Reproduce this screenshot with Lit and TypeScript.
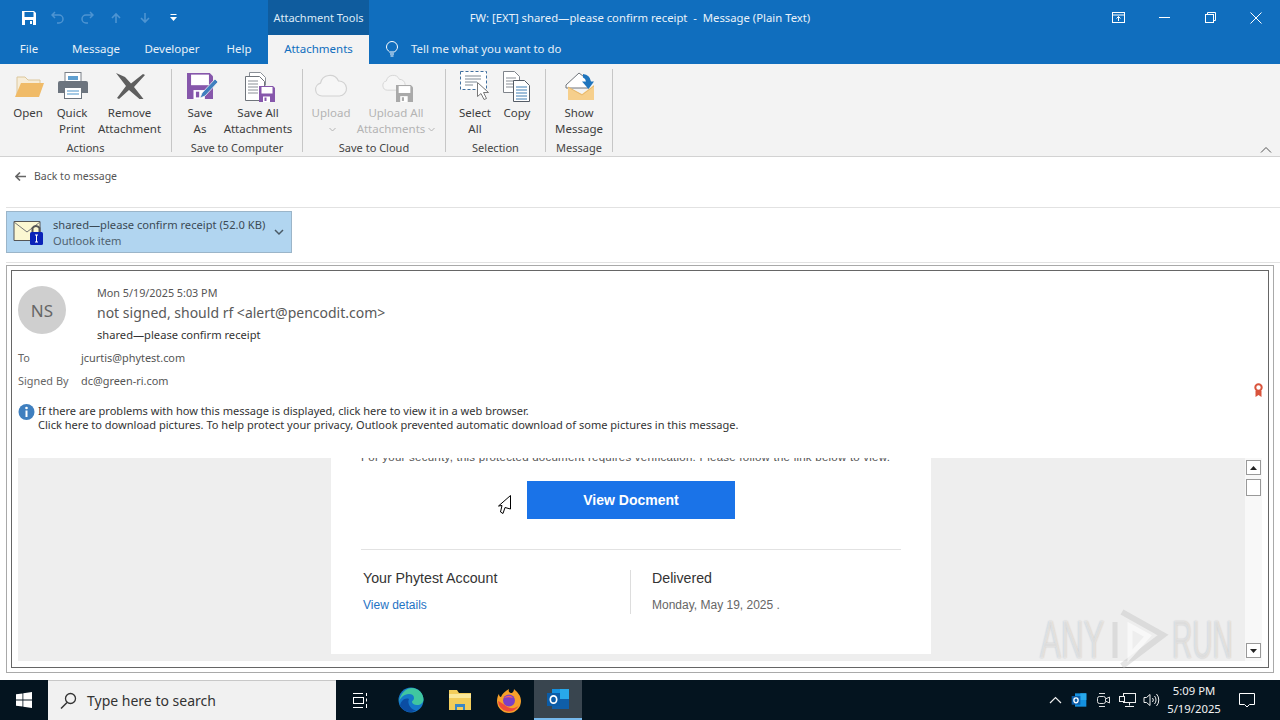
import { LitElement, html, css, svg } from 'lit';
import { customElement } from 'lit/decorators.js';

const floppy = (x: number, y: number, s: number, c: string) => svg`
  <g transform="translate(${x} ${y}) scale(${s / 16})">
    <path d="M0 0h14l2 2v14H0z" fill="${c}"/>
    <rect x="2.5" y="1" width="11" height="6.5" fill="#fff"/>
    <rect x="4" y="10.5" width="7" height="5.5" fill="#fff"/>
    <rect x="5.5" y="11.5" width="2" height="3.5" fill="${c}"/>
  </g>`;

const docLines = (x: number, y: number, w: number, n: number, c = '#8a8f96') =>
  Array.from({ length: n }, (_, i) => svg`<line x1="${x}" x2="${x + w}" y1="${y + i * 3}" y2="${y + i * 3}" stroke="${c}"/>`);

const cloud = (c: string) => svg`<path d="M9 28a6.500 6.500 0 0 1-1.500-12.800a9.500 9.500 0 0 1 18-2.200a7.500 7.500 0 0 1 1 15z" fill="#f6f6f6" stroke="${c}" stroke-width="1.200"/>`;

const ICONS: Record<string, unknown> = {
  open: svg`
    <path d="M7 27V9h8l3 3h12v5" fill="#f7edd8" stroke="#dcc79c"/>
    <path d="M5 29l6-14h23l-5 14z" fill="#f0bb68"/>`,
  print: svg`
    <rect x="11" y="4.500" width="16" height="9" fill="#fff" stroke="#7a8088"/>
    <rect x="14" y="8" width="10" height="4" fill="#5f9fd0"/>
    <path d="M4 15a2 2 0 0 1 2-2h26a2 2 0 0 1 2 2v10H4z" fill="#6c747e"/>
    <rect x="10.500" y="19.500" width="17" height="11" fill="#fff" stroke="#6c747e"/>
    <path d="M13 23h12M13 26h12" stroke="#4b93c9"/>`,
  remove: svg`
    <path d="M4 5l9 4 6 6.500L31 6l2 1-11 12 9.500 12h-4L17 22 7 31l-2-1 9-12z" fill="#5f5f5f"/>`,
  saveAs: svg`
    ${floppy(5, 5, 26, '#8657ab')}
    <path d="M33 11l3 3-13 14-5 2 2-5z" fill="#3f7fbf" stroke="#f3f3f3" stroke-width=".8"/>`,
  saveAll: svg`
    <path d="M9.500 8.500V4.500h11l5 5v8" fill="#fff" stroke="#8a8f96"/>
    <path d="M5.500 8.500h14l5 5v19h-19z" fill="#fff" stroke="#6f747b"/>
    ${docLines(8, 13, 10, 5)}
    ${floppy(19, 18, 16, '#8657ab')}`,
  upload: cloud('#d2d2d2'),
  uploadAll: svg`
    <g transform="translate(3 2) scale(.72)">${cloud('#d2d2d2')}</g>
    ${floppy(18, 17, 17, '#a9a9a9')}`,
  select: svg`
    <rect x="3.500" y="3.500" width="26" height="18" fill="#fff" stroke="#3f6f9f" stroke-dasharray="3 2"/>
    <path d="M8 8h16M8 11h16M8 14h12M8 17h8" stroke="#7f8a95"/>
    <path d="M20.500 14.500v14l3.500-3 3 6 2.500-1-3-6h5z" fill="#fff" stroke="#777"/>`,
  copy: svg`
    <path d="M4.500 3.500h11l5 5v16h-16z" fill="#fff" stroke="#7f848b"/>
    ${docLines(7, 10, 10, 4)}
    <path d="M14.500 12.500h11l5 5v16h-16z" fill="#fff" stroke="#555c66"/>
    ${docLines(17, 19, 11, 5, '#3f7fb5')}`,
  show: svg`
    <path d="M5 17L18 5l9 7v8H5z" fill="#fff" stroke="#70757b"/>
    <path d="M7 19v13h26V17L21 26z" fill="#f6cf8c"/>
    <path d="M7 19l14 8 12-9" fill="none" stroke="#e7b86c"/>
    <path d="M22 6a9 9 0 0 1 8 7.500h3L27.500 21 21 13.500h4a5 5 0 0 0-3-4z" fill="#1f75bd"/>`,
};

type Btn = { icon: string; lines: string[]; w: number; caret?: boolean };
type Group = { label: string; pad: string; off?: boolean; items: Btn[] };

const GROUPS: Group[] = [
  { label: 'Actions', pad: 'g-a', items: [
    { icon: 'open', lines: ['Open'], w: 44 },
    { icon: 'print', lines: ['Quick', 'Print'], w: 44 },
    { icon: 'remove', lines: ['Remove', 'Attachment'], w: 71 },
  ] },
  { label: 'Save to Computer', pad: 'g-b', items: [
    { icon: 'saveAs', lines: ['Save', 'As'], w: 44 },
    { icon: 'saveAll', lines: ['Save All', 'Attachments'], w: 72 },
  ] },
  { label: 'Save to Cloud', pad: 'g-c', off: true, items: [
    { icon: 'upload', lines: ['Upload'], w: 44, caret: true },
    { icon: 'uploadAll', lines: ['Upload All', 'Attachments'], w: 86, caret: true },
  ] },
  { label: 'Selection', pad: 'g-d', items: [
    { icon: 'select', lines: ['Select', 'All'], w: 44 },
    { icon: 'copy', lines: ['Copy'], w: 40 },
  ] },
  { label: 'Message', pad: 'g-e', items: [
    { icon: 'show', lines: ['Show', 'Message'], w: 66 },
  ] },
];

const TABS = [
  { t: 'File', w: 58 },
  { t: 'Message', w: 76 },
  { t: 'Developer', w: 76 },
  { t: 'Help', w: 58 },
];

@customElement('app-root')
export class AppRoot extends LitElement {
  static styles = css`
    :host {
      display: flex;
      flex-direction: column;
      position: relative;
      width: 1280px;
      height: 720px;
      overflow: hidden;
      background: #fff;
      font-family: "Noto Sans", "Open Sans", sans-serif;
      font-size: 12px;
      color: #444;
    }
    svg { display: block; flex: none; }

    .titlebar { display: flex; height: 35px; background: #106ebe; color: #fff; }
    .qat { width: 268px; display: flex; align-items: center; padding-left: 14px; box-sizing: border-box; }
    .qat span { width: 29px; display: flex; justify-content: center; }
    .tools { width: 101px; background: #0f5c9e; display: flex; align-items: center; justify-content: center; font-size: 11px; color: #dcebf7; }
    .title { flex: 1; padding-right: 184px; box-sizing: border-box; text-align: center; line-height: 35px; font-size: 11.3px; color: #e8f1f9; white-space: pre; }
    .winbtns { display: flex; padding-right: 1px; }
    .winbtns span { width: 46px; display: flex; align-items: center; justify-content: center; }

    .tabs { display: flex; height: 29px; background: #106ebe; color: #e6f0f8; align-items: stretch; font-size: 11.5px; }
    .tab { display: flex; align-items: center; justify-content: center; padding-bottom: 2px; box-sizing: border-box; }
    .tab.active { width: 101px; background: #f3f3f3; color: #106ebe; }
    .tell { display: flex; align-items: center; margin-left: 16px; gap: 12px; font-size: 11.4px; padding-bottom: 2px; }

    .ribbon { position: relative; display: flex; height: 92px; background: #f3f3f3; border-bottom: 1px solid #d2d2d2; color: #3d3d3d; flex: none; font-size: 11.5px; }
    .group { display: flex; flex-direction: column; height: 92px; position: relative; box-sizing: border-box; }
    .group::after { content: ''; position: absolute; right: 0; top: 5px; bottom: 4px; width: 1px; background: #c6c6c6; }
    .g-a { width: 172px; }
    .g-a .btns, .g-b .btns, .g-c .btns { padding-left: 6px; }
    .g-b { width: 131px; }
    .g-c { width: 143px; }
    .g-d { width: 100px; }
    .g-d .btns { padding-left: 7px; }
    .g-e { width: 67px; }
    .btns { display: flex; height: 76px; box-sizing: border-box; }
    .btn { display: flex; flex-direction: column; align-items: center; padding-top: 4px; box-sizing: border-box; line-height: 16px; text-align: center; white-space: nowrap; }
    .btn svg.ic { margin-bottom: 1px; }
    .off .btn { color: #b4b4b4; }
    .caret { display: inline-block; vertical-align: middle; margin-left: 3px; }
    .glabel { text-align: center; line-height: 16px; color: #444; font-size: 11px; margin-top: 1px; padding-right: 1px; }
    .collapse { position: absolute; right: 8px; bottom: 2px; }

    .back { display: flex; align-items: center; height: 51px; box-sizing: border-box; padding: 12px 0 24px 9px; gap: 8px; font-size: 10.5px; color: #555; flex: none; border-bottom: 1px solid #e2e2e2; margin-left: 6px; }
    .attach-row { height: 55px; box-sizing: border-box; padding-top: 3px; border-bottom: 1px solid #e2e2e2; margin-left: 6px; flex: none; }
    .chip { width: 286px; height: 42px; box-sizing: border-box; background: #b1d5f0; border: 1px solid #9bb5c9; display: flex; align-items: center; padding-left: 6px; gap: 9px; }
    .chip .txt { flex: 1; margin-top: 2px; line-height: 16px; font-size: 11.15px; color: #3b4a55; white-space: nowrap; }
    .chip .sub { color: #50626f; }

    .outer { margin: 2px 0 0 6px; width: 1268px; height: 408px; box-sizing: border-box; border: 1px solid #a9a9a9; padding: 4px; flex: none; }
    .inner { position: relative; height: 100%; box-sizing: border-box; border: 1px solid #666; padding: 0 6px 6px 6px; display: flex; flex-direction: column; }
    .head { height: 187px; padding-top: 14px; box-sizing: border-box; flex: none; }
    .who { display: flex; gap: 31px; }
    .avatar { width: 48px; height: 48px; margin-top: 1px; border-radius: 50%; background: #cfcfcf; color: #666; font-size: 17px; display: flex; align-items: center; justify-content: center; }
    .date { font-size: 10.8px; line-height: 16px; color: #555; }
    .sender { font-size: 14px; line-height: 22px; margin-top: 1px; color: #595959; }
    .subject { font-size: 11.15px; line-height: 16px; margin-top: 3px; color: #333; }
    .rcpt { display: flex; line-height: 16px; font-size: 10.9px; margin-top: 7px; color: #555; }
    .rcpt b { font-weight: 400; width: 63px; color: #666; }
    .info { display: flex; margin-top: 15px; font-size: 11.05px; line-height: 14px; color: #333; gap: 3px; white-space: nowrap; }
    .badge { position: absolute; right: 5px; top: 112px; }

    .viewport { flex: 1; display: flex; min-height: 0; }
    .canvas { flex: 1; background: #eeeeee; display: flex; justify-content: center; align-items: flex-start; overflow: hidden; }
    .mail { width: 600px; height: 196px; margin-right: 1px; background: #fff; padding: 0 30px; box-sizing: border-box; font-family: "Liberation Sans", Arial, sans-serif; }
    .sec { margin: -9px 0 0; width: 540px; line-height: 16px; font-size: 11.5px; letter-spacing: .23px; color: #555; white-space: nowrap; height: 16px; }
    .cta { display: flex; justify-content: center; margin-top: 16px; }
    .cta a { width: 208px; height: 38px; background: #1a73e8; color: #fff; font-weight: 700; font-size: 14px; display: flex; align-items: center; justify-content: center; }
    .rule { height: 1px; background: #e2e2e2; margin-top: 30px; }
    .cols { display: flex; margin: 20px 0 0 2px; }
    .col { height: 44px; }
    .col.l { width: 267px; border-right: 1px solid #ddd; }
    .col.r { padding-left: 21px; }
    .col h4 { margin: 0; font-weight: 400; font-size: 14.2px; line-height: 16px; color: #333; }
    .col p { margin: 12px 0 0; font-size: 12px; line-height: 14px; }
    .col a { color: #1f73c4; }
    .col.r p { color: #666; }

    .scroll { width: 17px; background: #f8f8f8; display: flex; flex-direction: column; align-items: center; padding: 2px 0 3px; box-sizing: border-box; }
    .sb { width: 15px; height: 15px; box-sizing: border-box; border: 1px solid #999; background: #fff; display: flex; align-items: center; justify-content: center; }
    .thumb { height: 17px; margin-top: 4px; }
    .grow { flex: 1; }

    .taskbar { margin-top: 7px; height: 40px; background: #04141f; display: flex; align-items: center; color: #fff; flex: none; }
    .start { width: 48px; display: flex; justify-content: center; }
    .search { width: 288px; height: 40px; box-sizing: border-box; background: #f1f1f1; border-top: 1px solid #c8c8c8; display: flex; align-items: center; padding-left: 12px; gap: 10px; color: #333; font-size: 14px; }
    .tb { width: 49px; height: 40px; display: flex; align-items: center; justify-content: center; box-sizing: border-box; }
    .tb.view { width: 48px; }
    .tb.edge { margin-left: 2px; }
    .tb.active { background: #39454f; border-bottom: 2px solid #76b9ed; width: 48px; margin-left: 1px; }
    .tray { margin-left: auto; display: flex; align-items: center; height: 40px; }
    .tray > span { width: 24px; display: flex; justify-content: center; }
    .clock { width: 58px; margin-left: 2px; text-align: center; font-size: 11.3px; line-height: 18px; color: #f2f2f2; white-space: nowrap; }
    .tray > .notif { width: 44px; margin-left: 2px; margin-right: 11px; }

    .cursor { position: absolute; left: 498px; top: 495px; }
    .mark { position: absolute; left: 1036px; top: 608px; width: 200px; height: 62px; pointer-events: none; font-family: "Liberation Sans", sans-serif; font-size: 54px; color: rgba(255, 255, 255, .5); text-shadow: 0 0 2px rgba(0, 0, 0, .22); }
    .mark span { position: absolute; top: 0; line-height: 62px; transform: scaleX(.52); transform-origin: left center; }
    .mark .any { left: 4px; transform: scaleX(.58); }
    .mark .run { left: 136px; }
    .mark svg { position: absolute; left: 70px; top: 0; }
  `;

  renderRibbon() {
    return GROUPS.map(g => html`
      <div class="group ${g.pad} ${g.off ? 'off' : ''}">
        <div class="btns">
          ${g.items.map(b => html`
            <div class="btn" style="width:${b.w}px">
              <svg class="ic" width="36" height="36" viewBox="0 0 36 36">${ICONS[b.icon]}</svg>
              ${b.lines.map((l, i) => html`<div>${l}${b.caret && i === 1 ? this.caret() : ''}</div>`)}
              ${b.caret && b.lines.length === 1 ? html`<div>${this.caret()}</div>` : ''}
            </div>`)}
        </div>
        <div class="glabel">${g.label}</div>
      </div>`);
  }

  caret() {
    return html`<svg class="caret" width="7" height="5" viewBox="0 0 7 5"><path d="M.5 1l3 3 3-3" fill="none" stroke="#b4b4b4"/></svg>`;
  }

  render() {
    return html`
      <div class="titlebar">
        <div class="qat">
          <span><svg width="16" height="16" viewBox="0 0 16 16"><path d="M1 1h12l2 2v12H1z" fill="#fff"/><rect x="3.500" y="2" width="9" height="5" fill="#106ebe"/><rect x="4" y="10" width="8" height="5" fill="#106ebe"/><rect x="9" y="11" width="2" height="3" fill="#fff"/></svg></span>
          <span><svg width="14" height="14" viewBox="0 0 14 14"><path d="M4 1L1 4l3 3M1 4h7a4 4 0 0 1 0 8H6" fill="none" stroke="#4d94d2" stroke-width="1.500"/></svg></span>
          <span><svg width="14" height="14" viewBox="0 0 14 14"><path d="M10 1l3 3-3 3M13 4H6a4 4 0 0 0 0 8h2" fill="none" stroke="#4d94d2" stroke-width="1.500"/></svg></span>
          <span><svg width="12" height="12" viewBox="0 0 12 12"><path d="M6 11V2M2 6l4-4 4 4" fill="none" stroke="#4d94d2" stroke-width="1.600"/></svg></span>
          <span><svg width="12" height="12" viewBox="0 0 12 12"><path d="M6 1v9M2 6l4 4 4-4" fill="none" stroke="#4d94d2" stroke-width="1.600"/></svg></span>
          <span><svg width="9" height="9" viewBox="0 0 9 9"><path d="M1.500 1.500h6" stroke="#fff"/><path d="M1 4h7L4.500 8z" fill="#fff"/></svg></span>
        </div>
        <div class="tools">Attachment Tools</div>
        <div class="title">FW: [EXT] shared—please confirm receipt  -  Message (Plain Text)</div>
        <div class="winbtns">
          <span><svg width="13" height="11" viewBox="0 0 13 11"><rect x=".5" y=".5" width="12" height="10" fill="none" stroke="#fff"/><path d="M0 3h13" stroke="#fff"/><path d="M6.500 9V4.500M4.500 6.500l2-2 2 2" fill="none" stroke="#fff"/></svg></span>
          <span><svg width="11" height="3" viewBox="0 0 11 3"><path d="M0 1.500h11" stroke="#fff"/></svg></span>
          <span><svg width="11" height="11" viewBox="0 0 11 11"><rect x=".5" y="2.500" width="8" height="8" fill="none" stroke="#fff"/><path d="M2.500 2.500v-2h8v8h-2" fill="none" stroke="#fff"/></svg></span>
          <span><svg width="12" height="12" viewBox="0 0 12 12"><path d="M.5.500l11 11M11.500.500l-11 11" stroke="#fff"/></svg></span>
        </div>
      </div>

      <div class="tabs">
        ${TABS.map(t => html`<div class="tab" style="width:${t.w}px">${t.t}</div>`)}
        <div class="tab active">Attachments</div>
        <div class="tell">
          <svg width="14" height="16" viewBox="0 0 14 16"><path d="M4.500 11C3 9.500 1.500 8.300 1.500 6a5.500 5.500 0 0 1 11 0c0 2.300-1.500 3.500-3 5z" fill="none" stroke="#fff"/><path d="M5 13h4M5.500 15h3" stroke="#fff"/></svg>
          <span>Tell me what you want to do</span>
        </div>
      </div>

      <div class="ribbon">
        ${this.renderRibbon()}
        <svg class="collapse" width="12" height="8" viewBox="0 0 12 8"><path d="M1 6.500l5-5 5 5" fill="none" stroke="#555"/></svg>
      </div>

      <div class="back">
        <svg width="11" height="9" viewBox="0 0 11 9"><path d="M5 .5L1 4.500l4 4M1 4.500h10" fill="none" stroke="#666" stroke-width="1.600"/></svg>
        <span>Back to message</span>
      </div>

      <div class="attach-row">
        <div class="chip">
          <svg width="31" height="30" viewBox="0 0 31 30">
            <path d="M1 4.500h26v19H1z" fill="#fbf7d2" stroke="#555"/>
            <path d="M1 5l13 10L27 5" fill="none" stroke="#777"/>
            <path d="M19.500 15v-4a4 4 0 0 1 7 0v4" fill="none" stroke="#555" stroke-width="2"/>
            <rect x="17" y="15" width="13" height="13" rx="1.500" fill="#0a22b8"/>
            <path d="M23.500 18v7M22 18h3M22 25h3" stroke="#fff"/>
          </svg>
          <div class="txt">shared—please confirm receipt (52.0 KB)<div class="sub">Outlook item</div></div>
          <svg width="10" height="7" viewBox="0 0 10 7" style="margin-right:7px"><path d="M1 1l4 4 4-4" fill="none" stroke="#4a5a66" stroke-width="1.500"/></svg>
        </div>
      </div>

      <div class="outer">
        <div class="inner">
          <div class="head">
            <div class="who">
              <div class="avatar">NS</div>
              <div>
                <div class="date">Mon 5/19/2025 5:03 PM</div>
                <div class="sender">not signed, should rf &lt;alert@pencodit.com&gt;</div>
                <div class="subject">shared—please confirm receipt</div>
              </div>
            </div>
            <div class="rcpt"><b>To</b><span>jcurtis@phytest.com</span></div>
            <div class="rcpt"><b>Signed By</b><span>dc@green-ri.com</span></div>
            <div class="info">
              <svg width="17" height="16" viewBox="0 0 16 16"><circle cx="8" cy="8" r="8" fill="#3f7fbf"/><circle cx="8" cy="4" r="1.300" fill="#fff"/><rect x="7" y="6.500" width="2" height="6.500" fill="#fff"/></svg>
              <div>If there are problems with how this message is displayed, click here to view it in a web browser.<br>Click here to download pictures. To help protect your privacy, Outlook prevented automatic download of some pictures in this message.</div>
            </div>
          </div>
          <svg class="badge" width="9" height="14" viewBox="0 0 9 14"><path d="M1.500 8v6l3-2 3 2V8z" fill="#d9543c"/><circle cx="4.500" cy="4.500" r="3.200" fill="#fff" stroke="#d9543c" stroke-width="2"/></svg>
          <div class="viewport">
            <div class="canvas">
              <div class="mail">
                <div class="sec">For your security, this protected document requires verification. Please follow the link below to view.</div>
                <div class="cta"><a>View Docment</a></div>
                <div class="rule"></div>
                <div class="cols">
                  <div class="col l"><h4>Your Phytest Account</h4><p><a>View details</a></p></div>
                  <div class="col r"><h4>Delivered</h4><p>Monday, May 19, 2025 .</p></div>
                </div>
              </div>
            </div>
            <div class="scroll">
              <div class="sb"><svg width="7" height="4" viewBox="0 0 7 4"><path d="M3.500 0L7 4H0z" fill="#222"/></svg></div>
              <div class="sb thumb"></div>
              <div class="grow"></div>
              <div class="sb"><svg width="7" height="4" viewBox="0 0 7 4"><path d="M0 0h7L3.500 4z" fill="#222"/></svg></div>
            </div>
          </div>
        </div>
      </div>

      <div class="taskbar">
        <div class="start"><svg width="16" height="16" viewBox="0 0 16 16" fill="#fff"><path d="M0 2.300l6.500-.9v6.200H0zM7.300 1.300L16 0v7.600H7.300zM0 8.400h6.500v6.200L0 13.700zM7.300 8.400H16V16l-8.700-1.300z"/></svg></div>
        <div class="search">
          <svg width="17" height="17" viewBox="0 0 17 17"><circle cx="10.500" cy="6.500" r="5" fill="none" stroke="#333" stroke-width="1.300"/><path d="M7 10.500l-6 6" stroke="#333" stroke-width="1.500"/></svg>
          <span>Type here to search</span>
        </div>
        <div class="tb view">
          <svg width="16" height="17" viewBox="0 0 16 17" fill="none" stroke="#fff"><path d="M1 1.500h10M1 15.500h10"/><rect x="1.500" y="5.500" width="10" height="6"/><path d="M14.500 1v3M14.500 6.500v3M14.500 12v4"/></svg>
        </div>
        <div class="tb edge">
          <svg width="26" height="26" viewBox="0 0 26 26"><circle cx="13" cy="13" r="12.500" fill="#1579c9"/><path d="M1 15C2 7 8 1 14 1c6 0 11.500 5 11.500 11.500 0 3.500-3 5.500-6.500 5.500-3 0-5-1.500-5-3 0-1.500 2-1.500 2-4 0-2.500-2-4-5-4C6 7 2 11 1 15z" fill="#40c6a0"/><path d="M11 12c-2 4 1 10 7 11.500-5 3-13 1.500-16-5 1-5 5-8 9-6.500z" fill="#0b4da3"/></svg>
        </div>
        <div class="tb">
          <svg width="24" height="22" viewBox="0 0 24 22"><path d="M1 1h8l2 3h12v17H1z" fill="#f3cd5b"/><rect x="1" y="5" width="22" height="4" fill="#fbe89a"/><path d="M7 21v-6h10v6h-2v-3H9v3z" fill="#3c87c7"/></svg>
        </div>
        <div class="tb">
          <svg width="26" height="26" viewBox="0 0 26 26"><path d="M18 2c3 3 7 6 7 12a12 12 0 0 1-24 0c0-3 1-6 2-7 0 2 1 3 2 3 1-3 4-6 8-8-1 3 1 4 3 4 1-1 2-2 2-4z" fill="#f7a02a"/><path d="M2 14a11 11 0 0 0 21 4c-3 4-9 4-13 1-3-2-5-4-8-5z" fill="#ee4a3b"/><circle cx="13" cy="13.500" r="6" fill="#7b3fc6"/><path d="M8 11c3-3 7-3 9 0-3-1-6-1-9 0z" fill="#f45f6b"/></svg>
        </div>
        <div class="tb active">
          <svg width="24" height="24" viewBox="0 0 24 24"><rect x="6" y="2" width="17" height="20" fill="#1490df"/><path d="M6 12h17v10H6z" fill="#0f5ea8"/><rect x="14" y="2" width="9" height="10" fill="#28a8ea"/><rect x="1" y="6" width="13" height="13" fill="#0a5ca8"/><ellipse cx="7.500" cy="12.500" rx="3.200" ry="3.700" fill="none" stroke="#fff" stroke-width="1.700"/></svg>
        </div>
        <div class="tray">
          <span><svg width="13" height="8" viewBox="0 0 13 8"><path d="M1 7l5.500-5.500L12 7" fill="none" stroke="#eee" stroke-width="1.200"/></svg></span>
          <span><svg width="16" height="16" viewBox="0 0 24 24"><rect x="6" y="2" width="17" height="20" fill="#1490df"/><rect x="14" y="2" width="9" height="10" fill="#28a8ea"/><rect x="1" y="6" width="13" height="13" fill="#0a5ca8"/><ellipse cx="7.500" cy="12.500" rx="3.200" ry="3.700" fill="none" stroke="#fff" stroke-width="2"/></svg></span>
          <span><svg width="15" height="16" viewBox="0 0 15 16" fill="none" stroke="#ddd"><rect x="1.500" y="4.500" width="8" height="7" rx="2"/><path d="M9.500 7l4-2v6l-4-2"/><path d="M3 1.500h6M3 14.500h6"/></svg></span>
          <span><svg width="17" height="15" viewBox="0 0 17 15" fill="none" stroke="#eee"><rect x="4.500" y=".5" width="12" height="9"/><rect x=".5" y="3.500" width="5" height="5" fill="#04141f"/><path d="M10.500 9.500v3M6 13.500h9"/></svg></span>
          <span><svg width="17" height="14" viewBox="0 0 17 14" fill="none" stroke="#eee"><path d="M1 4.500h2.500L7 1.500v11L3.500 9.500H1z"/><path d="M9.500 5a3 3 0 0 1 0 4M11.500 3a6 6 0 0 1 0 8M13.500 1a9 9 0 0 1 0 12"/></svg></span>
          <div class="clock">5:09 PM<br>5/19/2025</div>
          <span class="notif"><svg width="16" height="15" viewBox="0 0 16 15"><path d="M.5.500h15v11h-5l-2.500 2.500-2.500-2.500h-5z" fill="none" stroke="#fff"/></svg></span>
        </div>
      </div>

      <svg class="cursor" width="14" height="20" viewBox="0 0 14 20"><path d="M12.500.500L.5 11l3.500-.5-1.500 6.500 2.500 1.500 2-6 5.500 1.500z" fill="#fff" stroke="#000"/></svg>
      <div class="mark">
        <span class="any">ANY</span>
        <svg width="64" height="62" viewBox="0 0 64 62" fill="none" stroke="rgba(255,255,255,.6)" stroke-width="5"><path d="M16 4l41 23-41 31" stroke="rgba(190,190,190,.4)" stroke-width="6"/><path d="M24 18l18 10-18 20z"/><path d="M9 14v36" stroke="rgba(190,190,190,.4)"/></svg>
        <span class="run">RUN</span>
      </div>
    `;
  }
}
